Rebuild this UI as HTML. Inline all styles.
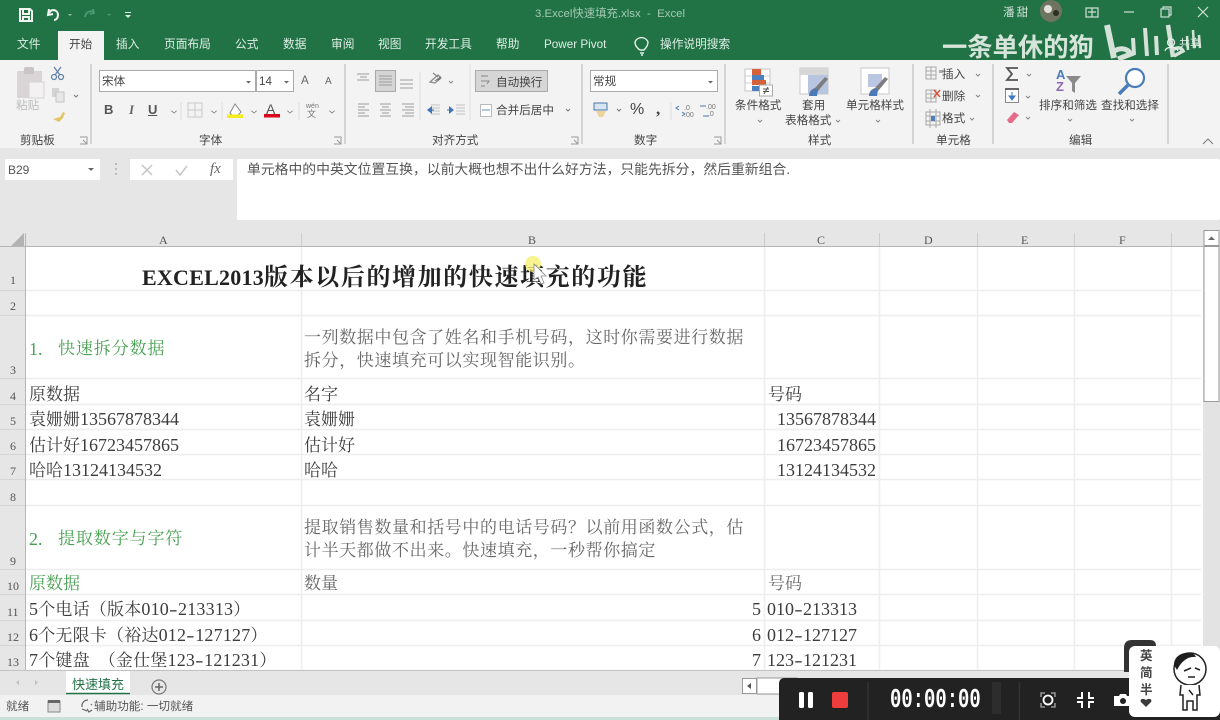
<!DOCTYPE html>
<html lang="zh"><head><meta charset="utf-8"><title>3.Excel快速填充.xlsx - Excel</title>
<style>
html,body{margin:0;padding:0}
#p{position:relative;width:1220px;height:720px;overflow:hidden;background:#fff;font-family:"Liberation Sans","Noto Sans CJK SC",sans-serif;color:#444}
.a,.t,.c,.h{position:absolute;white-space:nowrap;line-height:1}
.a{display:block}
.t{font-size:11.600px;color:#444}
.g{color:#dfeee6;font-size:11.700px}
.c{font-family:"Liberation Serif","Noto Serif CJK SC",serif;font-size:17px;color:#3d3d3d;line-height:20px}
.c b{font-weight:400;font-size:18px}
.c i{font-style:normal;display:inline-block;width:9px;text-align:center;transform:scaleX(1.4)}
.h{font-family:"Liberation Serif","Noto Serif CJK SC",serif;font-size:12px;color:#555}
.gr{color:#48a152}
.d{color:#686868}
svg{position:absolute;left:0;top:0}
</style></head><body><div id="p">

<!-- title & tab band -->
<div class="a" style="left:0;top:0;width:1220px;height:60px;background:#217346"></div>
<div class="a" style="left:58px;top:31px;width:46px;height:29px;background:#f3f3f3"></div>
<div class="a" style="left:0;top:60px;width:1220px;height:89px;background:#f3f3f3"></div>
<div class="a" style="left:0;top:148px;width:1220px;height:86px;background:#e6e6e6"></div>

<svg width="1220" height="720" viewBox="0 0 1220 720">
<!-- QAT -->
<g fill="none" stroke="#f2f6f3" stroke-width="2">
<path d="M20 9h10l2 2v10H20z"/><path d="M23 10v4h6v-4M23 21v-4h6v4"/>
<path d="M49 9l-1 6 5-1" /><path d="M49 13c3-5 9-3 9 2 0 3-2 5-4 5"/>
</g>
<path d="M68 14l2 2 2-2z" fill="#9ac0ab"/>
<path d="M85 17c1-5 5-7 9-5M93 9l1 4-4 1" fill="none" stroke="#4f9a72" stroke-width="1.8"/>
<path d="M107 14l2 2 2-2z" fill="#4f9a72"/>
<path d="M125 12h6v1h-6zM125 15l3 3 3-3z" fill="#dfeee6"/>
<!-- Tell me bulb -->
<g fill="none" stroke="#e4f0e9" stroke-width="1.4"><path d="M640 50c-3-2-5-5-5-8a7 7 0 0 1 13 0c0 3-2 6-4 8z"/><path d="M640 53h4M641 55h2"/></g>
<!-- clipboard -->
<g>
<rect x="17" y="71" width="25" height="27" fill="#d9d5d6" rx="1"/>
<rect x="24" y="67" width="10" height="7" fill="#c9c5c6" rx="2"/>
<path d="M29 82h15v16H29z" fill="#f3f1f2" stroke="#d5d5d5"/>
<g fill="none" stroke="#6484a8" stroke-width="1.3"><circle cx="54" cy="77" r="2.5"/><circle cx="61" cy="77" r="2.5"/><path d="M55 75l6-8M60 75l-6-8"/></g>
<path d="M52 88h7v9h-7z" fill="#d4d4d4"/><path d="M56 92h8v10h-8z" fill="#e8e8e8" stroke="#c4c4c4"/>
<path d="M53 119l7-2 3-5 2 1-2 5-4 4z" fill="#e0c56b"/>
<path d="M74 95l2 2 2-2" fill="none" stroke="#777"/>
</g>
<!-- separators -->
<g stroke="#c9c9c9" stroke-width="1.5">
<path d="M91 64v80M345 64v80M582 64v80M725 64v80M913 64v80M993 64v80M1168 64v80"/>
</g>
<g stroke="#dcdcdc">
<path d="M181 102v18M222 102v18M299 102v18M420 72v48M470 64v56M671 102v18"/>
</g>
<!-- font controls -->
<rect x="99.500" y="70.500" width="156" height="21" fill="#fff" stroke="#aaa"/>
<rect x="256.500" y="70.500" width="37" height="21" fill="#fff" stroke="#aaa"/>
<path d="M246 81l2.500 2.500 2.500-2.500zM284 81l2.500 2.500 2.500-2.500z" fill="#666"/>
<g fill="#777"><path d="M171 111l3 2.500 3-2.500-.6-.5-2.400 2-2.400-2zM211 111l3 2.500 3-2.500-.6-.5-2.400 2-2.400-2zM251 111l3 2.500 3-2.500-.6-.5-2.400 2-2.400-2zM287 111l3 2.500 3-2.500-.6-.5-2.400 2-2.400-2zM329 111l3 2.500 3-2.500-.6-.5-2.400 2-2.400-2z"/></g>
<g fill="none" stroke="#c9c9c9"><rect x="188" y="103" width="14" height="14"/><path d="M195 103v14M188 110h14"/></g>
<path d="M230 113l5-9 6 8-4 4h-4z" fill="#fff" stroke="#888"/><rect x="227" y="114.500" width="16" height="3.500" fill="#f5ee1c"/>
<rect x="264" y="114" width="16" height="3.500" fill="#d9051c"/>
<!-- align icons -->
<g stroke="#b9b9b9" stroke-width="1.500">
<path d="M357 74h12M360 77h7M357 80h12"/><path d="M358 104h11M358 107h7M358 110h11M358 113h7M358 116h11"/>
<path d="M380 104h11M382 107h7M380 110h11M382 113h7M380 116h11"/>
<path d="M400 80h13M400 84h13M400 88h13"/><path d="M402 104h12M405 107h9M402 110h12M405 113h9M402 116h12"/>
</g>
<rect x="375.500" y="70.500" width="20" height="21" fill="#d5d5d5" stroke="#a8a8a8"/>
<g stroke="#9c9c9c"><path d="M379 76h13M379 79h13M379 82h13M379 85h13"/></g>
<path d="M430 82l8-7 3 3-6 5zM433 73l5 4" fill="none" stroke="#888" stroke-width="1.200"/><path d="M434 81l7-5-1 4z" fill="#777"/>
<path d="M449 81l2 2 2-2" fill="none" stroke="#888"/>
<g stroke="#c2c2c2"><path d="M431 105h9M431 108h9M431 111h9M431 114h9M456 105h9M456 108h9M456 111h9M456 114h9"/></g>
<path d="M427 110l5-4v8z" fill="#4174b2"/><path d="M454 110l-5-4v8z" fill="#4174b2"/>
<path d="M434 110h-4M450 110h-3" stroke="#4174b2"/>
<rect x="475.500" y="70.500" width="72" height="21" fill="#d6d6d6" stroke="#aaa"/>
<g fill="none" stroke="#888"><path d="M481 76h7M481 81h8l-2 3M481 86h4"/></g>
<rect x="480.500" y="104.500" width="11" height="12" fill="#fff" stroke="#bbb"/><path d="M482 110h8" stroke="#5f8fc0"/>
<path d="M566 109l2 2 2-2" fill="none" stroke="#777"/>
<!-- number -->
<rect x="590.500" y="70.500" width="127" height="21" fill="#fff" stroke="#aaa"/>
<path d="M708 81l2.500 2.500 2.500-2.500z" fill="#666"/>
<rect x="594" y="103" width="13" height="7" fill="#d7e4f1" stroke="#4877aa"/><path d="M596 111h10l-3 6h-4z" fill="#eed39b"/>
<path d="M617 109l2 2 2-2" fill="none" stroke="#777"/>
<path d="M679 106l-3 2 3 2M682 116l3-2-3-2" fill="none" stroke="#4878ae"/>
<path d="M703 116h6M700 106h6" stroke="#4878ae"/>
<!-- cond format -->
<g>
<rect x="745" y="69" width="25" height="22" fill="#fff" stroke="#c6c6c6"/>
<path d="M745 76h25M745 83h25M753 69v22M761 69v22" stroke="#cfcfcf"/>
<rect x="752" y="69" width="9" height="6" fill="#d6623c"/><rect x="752" y="75" width="12" height="6" fill="#4c80bf"/><rect x="752" y="80" width="14" height="5" fill="#d6623c"/><rect x="752" y="86" width="7" height="5" fill="#4c80bf"/>
<rect x="759.500" y="85" width="13" height="11" fill="#fff" stroke="#aaa"/>
<path d="M763 89h6M763 91.500h6M768 87l-4 7" stroke="#555" fill="none"/>
</g>
<!-- table format -->
<g>
<rect x="800" y="68" width="28" height="26" fill="#fff" stroke="#c8c8c8"/>
<rect x="800" y="68" width="28" height="7" fill="#d7d7d7"/><rect x="808" y="75" width="20" height="19" fill="#b7c5e0"/>
<g transform="translate(2,-4)"><path d="M807 100c0-5 3-7 6-8l10-11 3 2-10 12c-1 3-3 5-9 5z" fill="#7d7d7d"/><path d="M807 100c1-5 4-8 9-7l-1 7z" fill="#4a7ab8"/></g>
<rect x="861" y="68" width="28" height="26" fill="#fff" stroke="#c8c8c8"/>
<rect x="868" y="74" width="14" height="13" fill="#b9c7e2"/>
<g transform="translate(1,-4)"><path d="M868 100c0-5 3-7 6-8l10-11 3 2-10 12c-1 3-3 5-9 5z" fill="#7d7d7d"/><path d="M868 100c1-5 4-8 9-7l-1 7z" fill="#4a7ab8"/></g>
</g>
<!-- cells group -->
<g fill="none" stroke="#a9a9a9">
<path d="M926 67h10v12h-10zM926 71h10M926 75h10M931 67v12"/><path d="M926 90h10v12h-10zM926 94h10M926 98h10M931 90v12"/><path d="M926 112h14v13h-14zM926 116h14M926 121h14M930 109v19M936 109v19"/>
</g>
<rect x="939" y="70" width="4" height="3" fill="#aaa"/><path d="M934 90l6 7M940 90l-6 7" stroke="#d8553c" stroke-width="1.500"/><rect x="931" y="116" width="4" height="5" fill="#517fb5"/>
<g fill="none" stroke="#888"><path d="M976 74l2 2 2-2M976 95l2 2 2-2M970 118l2 2 2-2"/>
<path d="M1027 74l2 2 2-2M1026 96l2 2 2-2M1026 117l2 2 2-2"/></g>
<!-- editing -->
<path d="M1018 68h-11l5 6-5 6h11" fill="none" stroke="#555" stroke-width="1.800"/>
<rect x="1005.500" y="89.500" width="13" height="13" fill="#fff" stroke="#8a8a8a"/><path d="M1005 89h14" stroke="#666" stroke-width="2"/>
<path d="M1012 92v6M1009 96l3 4 3-4z" fill="#3e78c2" stroke="#3e78c2"/>
<path d="M1007 120l7-8 5 3-7 8h-3z" fill="#e56d8b"/>
<path d="M1066 76h15l-6 7v10l-3-2v-8z" fill="#8a8a8a"/>
<circle cx="1135" cy="78" r="9" fill="#fff" stroke="#4a7cba" stroke-width="2.200"/><path d="M1128 85l-9 9" stroke="#4a7cba" stroke-width="3.500"/>
<g fill="none" stroke="#888"><path d="M1068 119l2 2 2-2M1130 119l2 2 2-2M876 120l2 2 2-2M836 120l2 2 2-2M758 120l2 2 2-2"/></g>
<path d="M1203 144l5-5 5 5" fill="none" stroke="#777"/>
<!-- dialog launchers -->
<g fill="none" stroke="#999"><path d="M80 137h7v7h-7M83 140l4 4M334 137h7v7h-7M337 140l4 4M571 137h7v7h-7M574 140l4 4M714 137h7v7h-7M717 140l4 4"/></g>
<!-- formula bar -->
<rect x="5" y="159" width="95" height="21" fill="#fff"/>
<path d="M88 168l3 3 3-3z" fill="#666"/>
<g fill="#bbb"><rect x="115" y="163" width="2" height="2"/><rect x="115" y="168" width="2" height="2"/><rect x="115" y="173" width="2" height="2"/></g>
<rect x="130" y="159" width="103" height="21" fill="#fff"/>
<path d="M142 165l10 10M152 165l-10 10" stroke="#c5c5c5" stroke-width="1.500"/>
<path d="M176 170l4 5 7-9" fill="none" stroke="#c5c5c5" stroke-width="1.500"/>
<rect x="237" y="159" width="983" height="61" rx="2" fill="#fff"/>
<!-- sheet -->
<rect x="0" y="232" width="1203" height="15" fill="#e6e6e6"/>
<rect x="0" y="247" width="25" height="423" fill="#e6e6e6"/>
<rect x="1203" y="232" width="17" height="445" fill="#e3e3e3"/>
<path d="M24 233v13H11z" fill="#b3b3b3"/>
<path d="M0 246.500H1203M25.500 233V670" stroke="#b5b5b5"/>
<g stroke="#eee" stroke-width="1.500">
<path d="M26 290.500H1201M26 315.500H1201M26 378.500H1201M26 404.500H1201M26 429.500H1201M26 454.500H1201M26 479.500H1201M26 505.500H1201M26 569.500H1201M26 594.500H1201M26 620.500H1201M26 645.500H1201M26 670.500H1201"/>
<path d="M301.500 247V670M764.500 247V670M879.500 247V670M977.500 247V670M1074.500 247V670M1171.500 247V670"/>
</g>
<g stroke="#cdcdcd"><path d="M301.500 233V246M764.500 233V246M879.500 233V246M977.500 233V246M1074.500 233V246M1171.500 233V246"/></g>
<path d="M0 290.500H25M0 315.500H25M0 378.500H25M0 404.500H25M0 429.500H25M0 454.500H25M0 479.500H25M0 505.500H25M0 569.500H25M0 594.500H25M0 620.500H25M0 645.500H25" stroke="#d5d5d5"/>
<!-- v scrollbar -->
<rect x="1204" y="230.500" width="15" height="15" fill="#fff" stroke="#9a9a9a"/>
<path d="M1208 240l3.500-3.500 3.500 3.500z" fill="#666"/>
<rect x="1204" y="246.500" width="15" height="155" fill="#fff" stroke="#9a9a9a"/>
<!-- sheet tabs band -->
<rect x="0" y="671" width="1220" height="24" fill="#e6e6e6"/>
<path d="M0 670.500H1220" stroke="#c2c2c2"/>
<rect x="66" y="671" width="64" height="22" fill="#fff"/>
<path d="M66 693.500H130" stroke="#217346" stroke-width="1.500"/>
<path d="M19 685l-3-2.500 3-2.500zM35 680l3 2.500-3 2.500z" fill="#bfbfbf"/>
<circle cx="159" cy="687" r="7" fill="none" stroke="#777" stroke-width="1.200"/><path d="M155 687h8M159 683v8" stroke="#666" stroke-width="1.500"/>
<rect x="742.500" y="678.500" width="14" height="15" fill="#fff" stroke="#999"/><path d="M751 683l-4 3 4 3z" fill="#555"/>
<rect x="757" y="678" width="40" height="16" fill="#fff" stroke="#999"/>
<!-- status bar -->
<rect x="0" y="695" width="1220" height="22" fill="#f2f2f2"/>
<rect x="0" y="717" width="1220" height="3" fill="#c9e0d8"/>
<rect x="48" y="701" width="12" height="11" fill="#ddd" stroke="#888"/><rect x="48" y="700" width="12" height="3" fill="#666"/>
<path d="M88 700a6 6 0 0 0-6 7M82 709l5 2M92 710l-3 2-2-3M91 704l1 1" fill="none" stroke="#666" stroke-width="1.200"/>
<!-- recorder -->
<path d="M779 720v-36q0-6 6-6H1220v42z" fill="#222"/>
<rect x="799" y="692" width="5" height="16" rx="1.500" fill="#fff"/><rect x="808" y="692" width="5" height="16" rx="1.500" fill="#fff"/>
<rect x="832" y="692" width="16" height="16" rx="2" fill="#ef3d3d"/>
<path d="M868 682v38M1019.500 682v38" stroke="#333" stroke-width="1.500"/>
<rect x="992" y="682" width="9" height="32" fill="#2d2d2d"/>
<g fill="none" stroke="#aaa" stroke-width="1.300"><path d="M1041 697v-4h4M1051 693h4v4M1055 703v4h-4M1045 707h-4v-4"/></g>
<circle cx="1048" cy="700" r="4.500" fill="none" stroke="#fff" stroke-width="1.800"/>
<g fill="none" stroke="#fff" stroke-width="2"><path d="M1082 692v6h-5M1089 692v6h5M1082 708v-6h-5M1089 708v-6h5"/></g>
<path d="M1114 696h5l1-2h6l1 2h5v10h-18z" fill="#fff"/><circle cx="1123" cy="701" r="3" fill="#222"/>
<!-- floating widget -->
<path d="M1124 672v-24q0-8 8-8h18q6 0 6 6v26z" fill="#333"/>
<rect x="1129" y="646" width="91" height="71" rx="6" fill="#fff"/>
<path d="M1141 702c-3-2-1-6 4-3 5-3 7 1 4 3l-4 4z" fill="#3a3a3a" transform="translate(1,1)"/>
<!-- character -->
<g fill="none" stroke="#222" stroke-width="1.500">
<circle cx="1190" cy="669" r="16" fill="#fff"/>
<path d="M1181 685l-1 10h3v15h4v-9h6v9h4v-15h3l-1-10" fill="#fff"/>
<path d="M1184 671l7-3M1195 668l5 2M1188 677h7"/>
<path d="M1189 690l4 5"/>
</g>
<path d="M1174 665c0-9 8-13 16-12 3 0 5 2 6 4-7-1-14 3-19 13z" fill="#1d1d1d"/>
<!-- logo bilibili text strokes -->
<g fill="none" stroke="#d4e2d8">
<path d="M1107 25l7 33" stroke-width="6"/><path d="M1113 52c7-5 14-4 18 2l-13 5" stroke-width="5"/>
<path d="M1133 38l1 17M1145 28l2 28M1156 36l1 19" stroke-width="4"/>
<path d="M1168 25l5 32" stroke-width="4.500"/><path d="M1172 50c5-3 9-3 11 1l-9 5" stroke-width="3.500"/>
<path d="M1187 36l1 14M1193 30l1 18M1199 35l1 13" stroke-width="2.500"/>
</g>
<path d="M1171 39a3.500 3.500 0 1 0 .1 0M1165 51c1-5 11-5 13 0" fill="none" stroke="#e4efe8" stroke-width="1.200"/>
<!-- window controls -->
<g fill="none" stroke="#cfe1d6" stroke-width="1.200"><rect x="1086" y="8" width="12" height="9"/><path d="M1092 8v9M1088 12h8"/>
<path d="M1124 12h10"/><rect x="1161" y="9" width="8" height="8"/><path d="M1163 9V7h8v8h-2"/>
<path d="M1198 7l10 10M1208 7l-10 10"/></g>
<circle cx="1051" cy="11" r="11" fill="#6e7460"/><circle cx="1048" cy="9" r="4" fill="#e2e2da"/><circle cx="1056" cy="13" r="3" fill="#2e2e28"/>
</svg>

<!-- title text -->
<span class="t" style="left:535px;top:9px;font-size:11.400px;color:#a3c9b3">3.Excel快速填充.xlsx&nbsp; -&nbsp; Excel</span>
<span class="t" style="left:1003px;top:7px;color:#cde0d5;letter-spacing:2px">潘甜</span>
<span class="t g" style="left:17px;top:39px">文件</span>
<span class="t" style="left:69px;top:39px;color:#444">开始</span>
<span class="t g" style="left:116px;top:39px">插入</span>
<span class="t g" style="left:164px;top:39px">页面布局</span>
<span class="t g" style="left:235px;top:39px">公式</span>
<span class="t g" style="left:283px;top:39px">数据</span>
<span class="t g" style="left:331px;top:39px">审阅</span>
<span class="t g" style="left:378px;top:39px">视图</span>
<span class="t g" style="left:425px;top:39px">开发工具</span>
<span class="t g" style="left:496px;top:39px">帮助</span>
<span class="t g" style="left:544px;top:39px">Power Pivot</span>
<span class="t g" style="left:660px;top:39px">操作说明搜索</span>
<span class="t" style="left:942px;top:36px;font-size:25.300px;color:#d6e4da;font-weight:700">一条单休的狗</span>
<span class="t" style="left:1179px;top:39px;font-size:11px;color:#e4efe8">共享</span>

<!-- ribbon labels -->
<span class="t" style="left:16px;top:100px;color:#bdbdbd">粘贴</span>
<span class="t" style="left:20px;top:135px">剪贴板</span>
<span class="t" style="left:102px;top:76px">宋体</span>
<span class="t" style="left:259px;top:76px">14</span>
<span class="t" style="left:301px;top:75px;color:#666">A</span>
<span class="t" style="left:325px;top:77px;font-size:10px;color:#666">A</span>
<span class="t" style="left:104px;top:103px;font-weight:700;font-size:13px;color:#555">B</span>
<span class="t" style="left:129px;top:103px;font-style:italic;font-weight:700;font-size:13px;color:#666;font-family:'Liberation Serif',serif">I</span>
<span class="t" style="left:148px;top:103px;font-size:13px;font-weight:700;color:#555;text-decoration:underline">U</span>
<span class="t" style="left:266px;top:102px;font-size:14px;color:#555">A</span>
<span class="t" style="left:306px;top:103px;font-size:7px;color:#777">wén</span>
<span class="t" style="left:307px;top:110px;font-size:9px;color:#777">文</span>
<span class="t" style="left:199px;top:135px">字体</span>
<span class="t" style="left:496px;top:77px;color:#444">自动换行</span>
<span class="t" style="left:496px;top:105px">合并后居中</span>
<span class="t" style="left:432px;top:135px">对齐方式</span>
<span class="t" style="left:593px;top:76px">常规</span>
<span class="t" style="left:630px;top:102px;font-size:16px">%</span>
<span class="t" style="left:656px;top:100px;font-size:17px;font-weight:700;font-family:'Liberation Serif',serif">,</span>
<span class="t" style="left:684px;top:105px;font-size:7px;line-height:7px;color:#777;white-space:pre">.0
.00</span>
<span class="t" style="left:706px;top:104px;font-size:7px;line-height:7px;color:#777;white-space:pre">.00
 .0</span>
<span class="t" style="left:634px;top:135px">数字</span>
<span class="t" style="left:735px;top:100px">条件格式</span>
<span class="t" style="left:802px;top:100px">套用</span>
<span class="t" style="left:785px;top:115px">表格格式</span>
<span class="t" style="left:846px;top:100px">单元格样式</span>
<span class="t" style="left:808px;top:135px">样式</span>
<span class="t" style="left:942px;top:69px">插入</span>
<span class="t" style="left:942px;top:91px">删除</span>
<span class="t" style="left:942px;top:113px">格式</span>
<span class="t" style="left:936px;top:135px">单元格</span>
<span class="t" style="left:1056px;top:68px;font-size:13px;font-weight:700;color:#4a7cba">A</span>
<span class="t" style="left:1056px;top:80px;font-size:13px;font-weight:700;color:#8e69b0">Z</span>
<span class="t" style="left:1039px;top:100px">排序和筛选</span>
<span class="t" style="left:1101px;top:100px">查找和选择</span>
<span class="t" style="left:1069px;top:135px">编辑</span>

<!-- formula -->
<span class="t" style="left:8px;top:164px;font-size:12px;color:#555">B29</span>
<span class="t" style="left:210px;top:162px;font-size:15px;font-style:italic;font-family:'Liberation Serif',serif;color:#666">fx</span>
<span class="t" style="left:247px;top:163px;font-size:13.830px;color:#555">单元格中的中英文位置互换，以前大概也想不出什么好方法，只能先拆分，然后重新组合.</span>

<!-- col headers -->
<span class="h" style="left:159px;top:234px">A</span>
<span class="h" style="left:528px;top:234px">B</span>
<span class="h" style="left:817px;top:234px">C</span>
<span class="h" style="left:924px;top:234px">D</span>
<span class="h" style="left:1021px;top:234px">E</span>
<span class="h" style="left:1119px;top:234px">F</span>
<!-- row headers -->
<span class="h" style="left:10px;top:274px">1</span>
<span class="h" style="left:10px;top:300px">2</span>
<span class="h" style="left:10px;top:364px">3</span>
<span class="h" style="left:10px;top:390px">4</span>
<span class="h" style="left:10px;top:415px">5</span>
<span class="h" style="left:10px;top:440px">6</span>
<span class="h" style="left:10px;top:465px">7</span>
<span class="h" style="left:10px;top:491px">8</span>
<span class="h" style="left:10px;top:555px">9</span>
<span class="h" style="left:7px;top:580px">10</span>
<span class="h" style="left:7px;top:606px">11</span>
<span class="h" style="left:7px;top:631px">12</span>
<span class="h" style="left:7px;top:656px">13</span>

<!-- cells -->
<span class="c" style="left:142px;top:264px;font-size:24px;line-height:28px;font-weight:700;color:#222;letter-spacing:1.600px"><span style="font-size:22px;letter-spacing:.25px">EXCEL2013</span>版本以后的增加的快速填充的功能</span>
<span class="c gr" style="left:29px;top:339px"><b>1.</b></span>
<span class="c gr" style="left:58px;top:339px;letter-spacing:.9px">快速拆分数据</span>
<span class="c d" style="left:304px;top:328px;letter-spacing:.6px">一列数据中包含了姓名和手机号码，这时你需要进行数据</span>
<span class="c d" style="left:304px;top:351px;letter-spacing:.6px">拆分，快速填充可以实现智能识别。</span>
<span class="c" style="left:29px;top:385px">原数据</span>
<span class="c" style="left:304px;top:385px">名字</span>
<span class="c" style="left:768px;top:385px">号码</span>
<span class="c" style="left:29px;top:409px">袁姗姗<b>13567878344</b></span>
<span class="c" style="left:304px;top:410px">袁姗姗</span>
<span class="c" style="left:777px;top:409px"><b>13567878344</b></span>
<span class="c" style="left:29px;top:435px">估计好<b>16723457865</b></span>
<span class="c" style="left:304px;top:436px">估计好</span>
<span class="c" style="left:777px;top:435px"><b>16723457865</b></span>
<span class="c" style="left:29px;top:460px">哈哈<b>13124134532</b></span>
<span class="c" style="left:304px;top:461px">哈哈</span>
<span class="c" style="left:777px;top:460px"><b>13124134532</b></span>
<span class="c gr" style="left:29px;top:529px"><b>2.</b></span>
<span class="c gr" style="left:58px;top:529px;letter-spacing:.9px">提取数字与字符</span>
<span class="c d" style="left:304px;top:518px;letter-spacing:.6px">提取销售数量和括号中的电话号码？以前用函数公式，估</span>
<span class="c d" style="left:304px;top:541px;letter-spacing:.6px">计半天都做不出来。快速填充，一秒帮你搞定</span>
<span class="c gr" style="left:29px;top:574px">原数据</span>
<span class="c d" style="left:304px;top:574px">数量</span>
<span class="c d" style="left:768px;top:574px">号码</span>
<span class="c" style="left:29px;top:599px;letter-spacing:.2px"><b>5</b>个电话（版本<b>010<i>-</i>213313</b>）</span>
<span class="c" style="left:752px;top:599px"><b>5</b></span>
<span class="c" style="left:767px;top:599px"><b>010<i>-</i>213313</b></span>
<span class="c" style="left:29px;top:625px;letter-spacing:.2px"><b>6</b>个无限卡（裕达<b>012<i>-</i>127127</b>）</span>
<span class="c" style="left:752px;top:625px"><b>6</b></span>
<span class="c" style="left:767px;top:625px"><b>012<i>-</i>127127</b></span>
<span class="c" style="left:29px;top:650px;letter-spacing:.2px"><b>7</b>个键盘&nbsp;&nbsp;（金仕堡<b>123<i>-</i>121231</b>）</span>
<span class="c" style="left:752px;top:650px"><b>7</b></span>
<span class="c" style="left:767px;top:650px"><b>123<i>-</i>121231</b></span>

<!-- tabs/status -->
<span class="t" style="left:72px;top:678px;font-size:13px;color:#217346">快速填充</span>
<span class="t" style="left:6px;top:701px;color:#555">就绪</span>
<span class="t" style="left:94px;top:701px;color:#555">辅助功能: 一切就绪</span>
<!-- recorder text -->
<span class="t" style="left:890px;top:688px;font-size:27px;font-weight:700;color:#fff;font-family:'Liberation Mono',monospace;transform:scaleX(.7);transform-origin:left top">00:00:00</span>
<span class="t" style="left:1140px;top:648px;font-size:12.500px;line-height:17px;white-space:normal;width:13px;font-weight:700;color:#444">英简半</span>

<!-- cursor on top of text -->
<svg width="1220" height="720" viewBox="0 0 1220 720">
<circle cx="533" cy="264" r="8" fill="#f6ef6a" fill-opacity=".75"/>
<path d="M534 264v16l4-3 3 7 3-1-3-7h5z" fill="#fff" stroke="#888" stroke-width=".8"/>
</svg>
</div></body></html>
